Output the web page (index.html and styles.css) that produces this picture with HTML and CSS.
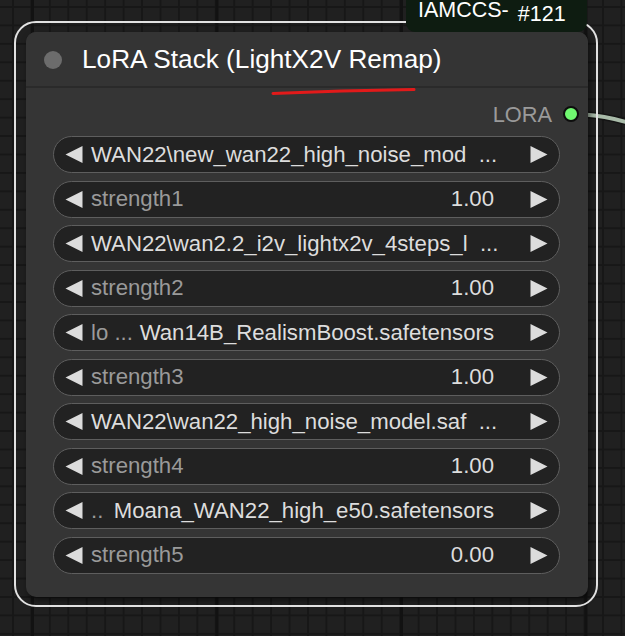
FILE: index.html
```html
<!DOCTYPE html>
<html>
<head>
<meta charset="utf-8">
<link rel="stylesheet" href="styles.css">
</head>
<body>
<div class="canvas">
  <svg class="wire" width="625" height="636" viewBox="0 0 625 636">
    <path d="M584 114.5 Q605 116 626 122" fill="none" stroke="#141414" stroke-width="7"/>
    <path d="M584 114.5 Q605 116 626 122" fill="none" stroke="#a9bba9" stroke-width="4"/>
  </svg>

  <div class="node">
    <div class="title">
      <span class="title-dot"></span>
      <span class="title-text">LoRA Stack (LightX2V Remap)</span>
    </div>
    <div class="outputs">
      <span class="out-label">LORA</span>
      <span class="out-dot"></span>
    </div>
    <div class="widgets">
      <div class="pill">
        <svg class="arrow" viewBox="0 0 18 18"><polygon points="18,0 18,18 0,9"/></svg>
        <span class="value left">WAN22\new_wan22_high_noise_mod&nbsp; ...</span>
        <svg class="arrow" viewBox="0 0 18 18"><polygon points="0,0 0,18 18,9"/></svg>
      </div>
      <div class="pill">
        <svg class="arrow" viewBox="0 0 18 18"><polygon points="18,0 18,18 0,9"/></svg>
        <span class="label">strength1</span>
        <span class="value">1.00</span>
        <svg class="arrow" viewBox="0 0 18 18"><polygon points="0,0 0,18 18,9"/></svg>
      </div>
      <div class="pill">
        <svg class="arrow" viewBox="0 0 18 18"><polygon points="18,0 18,18 0,9"/></svg>
        <span class="value left">WAN22\wan2.2_i2v_lightx2v_4steps_l&nbsp; ...</span>
        <svg class="arrow" viewBox="0 0 18 18"><polygon points="0,0 0,18 18,9"/></svg>
      </div>
      <div class="pill">
        <svg class="arrow" viewBox="0 0 18 18"><polygon points="18,0 18,18 0,9"/></svg>
        <span class="label">strength2</span>
        <span class="value">1.00</span>
        <svg class="arrow" viewBox="0 0 18 18"><polygon points="0,0 0,18 18,9"/></svg>
      </div>
      <div class="pill">
        <svg class="arrow" viewBox="0 0 18 18"><polygon points="18,0 18,18 0,9"/></svg>
        <span class="label">lo ...</span>
        <span class="value">Wan14B_RealismBoost.safetensors</span>
        <svg class="arrow" viewBox="0 0 18 18"><polygon points="0,0 0,18 18,9"/></svg>
      </div>
      <div class="pill">
        <svg class="arrow" viewBox="0 0 18 18"><polygon points="18,0 18,18 0,9"/></svg>
        <span class="label">strength3</span>
        <span class="value">1.00</span>
        <svg class="arrow" viewBox="0 0 18 18"><polygon points="0,0 0,18 18,9"/></svg>
      </div>
      <div class="pill">
        <svg class="arrow" viewBox="0 0 18 18"><polygon points="18,0 18,18 0,9"/></svg>
        <span class="value left">WAN22\wan22_high_noise_model.saf&nbsp; ...</span>
        <svg class="arrow" viewBox="0 0 18 18"><polygon points="0,0 0,18 18,9"/></svg>
      </div>
      <div class="pill">
        <svg class="arrow" viewBox="0 0 18 18"><polygon points="18,0 18,18 0,9"/></svg>
        <span class="label">strength4</span>
        <span class="value">1.00</span>
        <svg class="arrow" viewBox="0 0 18 18"><polygon points="0,0 0,18 18,9"/></svg>
      </div>
      <div class="pill">
        <svg class="arrow" viewBox="0 0 18 18"><polygon points="18,0 18,18 0,9"/></svg>
        <span class="label">..</span>
        <span class="value">Moana_WAN22_high_e50.safetensors</span>
        <svg class="arrow" viewBox="0 0 18 18"><polygon points="0,0 0,18 18,9"/></svg>
      </div>
      <div class="pill">
        <svg class="arrow" viewBox="0 0 18 18"><polygon points="18,0 18,18 0,9"/></svg>
        <span class="label">strength5</span>
        <span class="value">0.00</span>
        <svg class="arrow" viewBox="0 0 18 18"><polygon points="0,0 0,18 18,9"/></svg>
      </div>
    </div>
  </div>

  <div class="selection"></div>

  <div class="badge">
    <span class="badge-a">IAMCCS-</span>
    <span class="badge-b">#121</span>
  </div>

  <svg class="mark" width="625" height="636" viewBox="0 0 625 636">
    <path d="M273 93.5 Q340 90.5 414 89.5" fill="none" stroke="#e21a1a" stroke-width="3" stroke-linecap="round"/>
  </svg>
</div>
</body>
</html>
```

FILE: styles.css
```css
html, body {
  margin: 0;
  padding: 0;
}

body {
  width: 625px;
  height: 636px;
  overflow: hidden;
  background-color: #202020;
  background-image:
    linear-gradient(90deg, #121212 3px, transparent 3px),
    linear-gradient(90deg, #171717 2px, transparent 2px),
    linear-gradient(#171717 2px, transparent 2px);
  background-size: 184.5px 100%, 18.45px 18.45px, 18.45px 18.45px;
  background-position: 31px 0, 12px 0, 0 6px;
  font-family: "Liberation Sans", Arial, sans-serif;
}

.canvas {
  position: relative;
  width: 625px;
  height: 636px;
}

.wire, .mark {
  position: absolute;
  left: 0;
  top: 0;
}

.wire { z-index: 0; }
.mark { z-index: 4; }

.node {
  position: absolute;
  left: 26px;
  top: 32px;
  width: 562px;
  height: 565px;
  box-sizing: border-box;
  background: #353535;
  border-radius: 10px;
  box-shadow: 2px 3px 6px rgba(0, 0, 0, 0.55);
  display: flex;
  flex-direction: column;
  z-index: 1;
}

.title {
  height: 54px;
  background: #343434;
  border-radius: 10px 10px 0 0;
  border-bottom: 2px solid #2a2a2a;
  display: flex;
  align-items: center;
  padding-left: 18px;
  gap: 20px;
}

.title-dot {
  width: 18px;
  height: 18px;
  border-radius: 50%;
  background: #6c6c6c;
  margin-top: 2px;
  flex: none;
}

.title-text {
  color: #ffffff;
  font-size: 26.2px;
  line-height: 30px;
  white-space: nowrap;
}

.outputs {
  height: 44px;
  padding-top: 4px;
  display: flex;
  align-items: center;
  justify-content: flex-end;
  padding-right: 9px;
  gap: 11px;
}

.out-label {
  color: #9a9a9a;
  font-size: 21.8px;
  line-height: 24px;
  margin-top: 2px;
}

.out-dot {
  width: 12px;
  height: 12px;
  border-radius: 50%;
  background: #70f870;
  border: 2px solid #0d0d0d;
  flex: none;
}

.widgets {
  display: flex;
  flex-direction: column;
  gap: 7.5px;
  padding: 0 28px 0 27px;
}

.pill {
  height: 37px;
  box-sizing: border-box;
  border: 1.5px solid #5e5e5e;
  border-radius: 19px;
  background: #222222;
  display: flex;
  align-items: center;
  padding: 0 11px;
  font-size: 22.2px;
  line-height: 24px;
  white-space: nowrap;
}

.arrow {
  width: 18px;
  height: 17px;
  flex: none;
  fill: #dcdcdc;
}

.label {
  color: #9a9a9a;
  margin-left: 8px;
  flex: none;
}

.value {
  color: #dddddd;
  margin-left: auto;
  margin-right: 36px;
}

.value.left {
  margin-left: 8px;
  margin-right: auto;
}

.selection {
  position: absolute;
  left: 14px;
  top: 21px;
  width: 584px;
  height: 586px;
  box-sizing: border-box;
  border: 2px solid #e2e2e2;
  border-radius: 22px;
  z-index: 2;
  pointer-events: none;
}

.badge {
  position: absolute;
  left: 406px;
  top: 0;
  width: 181px;
  height: 32px;
  box-sizing: border-box;
  background: #0e1c11;
  border-radius: 0 0 9px 9px;
  padding-left: 12px;
  display: flex;
  align-items: flex-start;
  gap: 9px;
  color: #ffffff;
  font-size: 21.5px;
  line-height: 21px;
  z-index: 3;
}

.badge-a {
  margin-top: 0;
}

.badge-b {
  margin-top: 3.5px;
}
```
